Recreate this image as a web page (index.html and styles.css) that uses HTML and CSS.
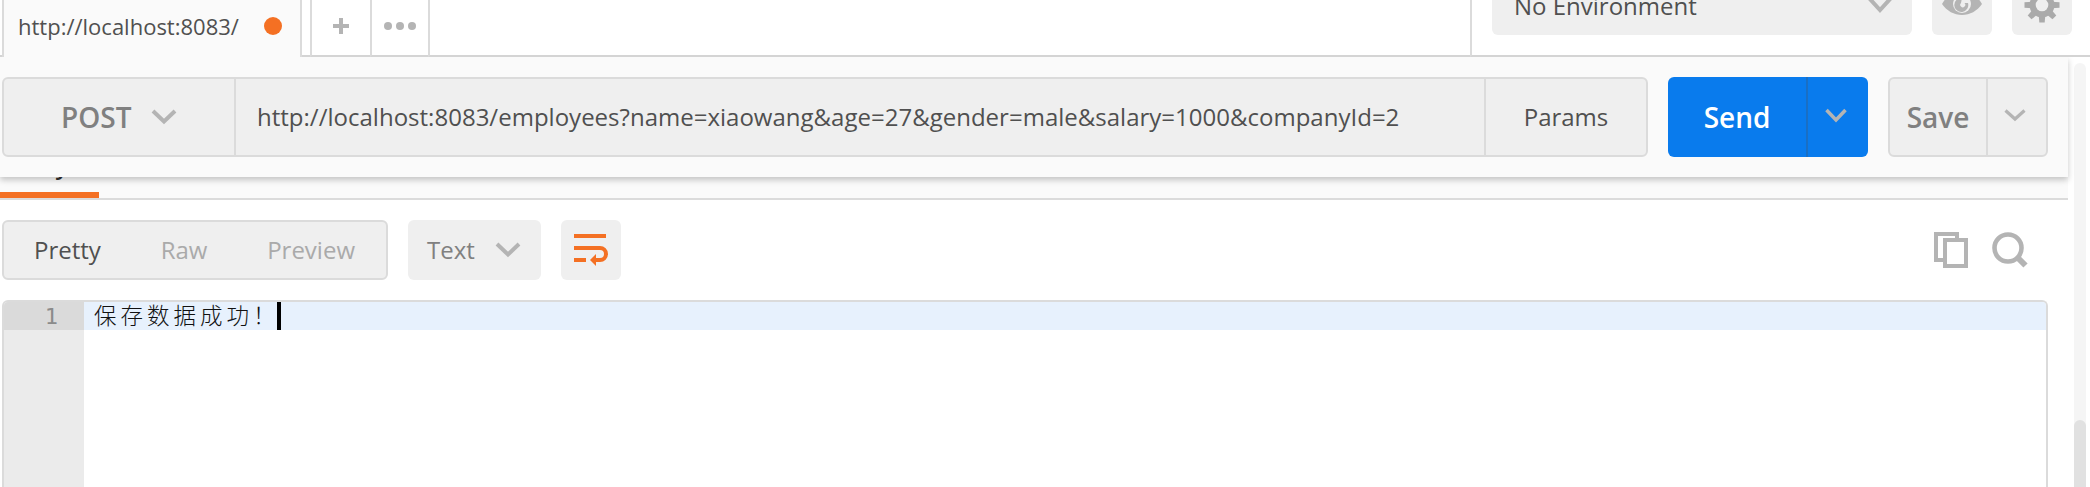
FILE: index.html
```html
<!DOCTYPE html>
<html lang="en">
<head>
<meta charset="utf-8">
<title>Request builder</title>
<link rel="stylesheet" href="styles.css">
</head>
<body>
<div class="app">
  <header class="topbar">
    <div class="tab"><span class="tab-name">http://localhost:8083/</span><span class="dot"></span></div>
    <div class="tab-gap"></div>
    <div class="tab-add"><svg width="16" height="16" viewBox="0 0 16 16"><path d="M8 0V16M0 8H16" stroke="#b4b4b4" stroke-width="4"/></svg></div>
    <div class="tab-more"><svg width="32" height="8" viewBox="0 0 32 8" fill="#b4b4b4"><circle cx="4" cy="4" r="4"/><circle cx="16" cy="4" r="4"/><circle cx="28" cy="4" r="4"/></svg></div>
    <div class="tab-rest"></div>
    <div class="environment">
      <div class="env-select"><span>No Environment</span>
        <svg width="26" height="18" viewBox="0 0 26 18"><path d="M2 2L13 14L24 2" fill="none" stroke="#b4b4b4" stroke-width="4"/></svg></div>
      <div class="square">
        <svg width="40" height="30" viewBox="0 0 40 30"><path d="M0 14C5 5 12 1 20 1S35 5 40 14C35 21 28 25 20 25S5 21 0 14Z" fill="#b4b4b4"/><circle cx="20" cy="14" r="9" fill="#efefef"/><path d="M20 8A7 7 0 1 0 26 13H22.500A2.500 2.500 0 1 1 19 13Z" fill="#b4b4b4"/></svg></div>
      <div class="square">
        <svg width="36" height="36" viewBox="-18 -18 36 36"><g fill="#aaa"><circle r="12.500"/><path id="tooth" d="M-3.300 -10L-2.700 -17.500H2.700L3.300 -10Z"/><use href="#tooth" transform="rotate(45)"/><use href="#tooth" transform="rotate(90)"/><use href="#tooth" transform="rotate(135)"/><use href="#tooth" transform="rotate(180)"/><use href="#tooth" transform="rotate(225)"/><use href="#tooth" transform="rotate(270)"/><use href="#tooth" transform="rotate(315)"/></g><circle r="6.300" fill="#efefef"/></svg></div>
    </div>
  </header>
  <div class="body">
    <main class="content">
      <section class="request">
        <div class="url-group">
          <div class="method"><span>POST</span><svg width="26" height="16" viewBox="0 0 26 16"><path d="M2 2L13 12.500L24 2" fill="none" stroke="#b4b4b4" stroke-width="4"/></svg></div>
          <div class="url"><span>http://localhost:8083/employees?name=xiaowang&amp;age=27&amp;gender=male&amp;salary=1000&amp;companyId=2</span></div>
          <div class="params">Params</div>
        </div>
        <div class="send"><div class="send-main">Send</div><div class="send-drop"><svg width="22" height="16" viewBox="0 0 22 16"><path d="M1.500 2L11 12L20.500 2" fill="none" stroke="#b4b4b4" stroke-width="3.500"/></svg></div></div>
        <div class="save"><div class="save-main">Save</div><div class="save-drop"><svg width="22" height="14" viewBox="0 0 22 14"><path d="M1.500 1.500L11 10L20.500 1.500" fill="none" stroke="#b4b4b4" stroke-width="3.200"/></svg></div></div>
      </section>
      <nav class="response-tabs"><div class="response-tab"><span>Body</span></div></nav>
      <div class="toolbar">
        <div class="modes"><span class="mode mode-on">Pretty</span><span class="mode">Raw</span><span class="mode">Preview</span></div>
        <div class="format"><span>Text</span><svg width="26" height="16" viewBox="0 0 26 16"><path d="M2 2L13 12.500L24 2" fill="none" stroke="#b4b4b4" stroke-width="4"/></svg></div>
        <div class="wrap"><svg width="34" height="32" viewBox="0 0 34 32"><path d="M0 2H32M0 14H26A6 6 0 0 1 26 26H21M0 26H12" fill="none" stroke="#f47023" stroke-width="4"/><path d="M16 26L22 20V32Z" fill="#f47023"/></svg></div>
        <div class="tools">
          <svg width="34" height="36" viewBox="0 0 34 36" fill="none" stroke="#b4b4b4" stroke-width="4"><path d="M11 28H2V2H23V8"/><path d="M11 8H32V34H11Z"/></svg>
          <svg width="36" height="36" viewBox="0 0 36 36" fill="none" stroke="#b4b4b4"><circle cx="16" cy="16" r="13.500" stroke-width="4.600"/><path d="M25.500 25.500L33.500 33.500" stroke-width="6"/></svg>
        </div>
      </div>
      <div class="editor">
        <div class="gutter"><div class="line-no">1</div></div>
        <div class="code"><div class="line"><span class="code-text">保存数据成功！</span><span class="caret"></span></div></div>
      </div>
    </main>
    <div class="scrollbar"><div class="thumb"></div></div>
  </div>
</div>
</body>
</html>
```
FILE: styles.css
```css
* { box-sizing: border-box; }
html, body { height: 487px; overflow: hidden; }
body { margin: 0; background: #fff; font-family: "Open Sans", "Noto Sans", sans-serif; font-size: 24px; color: #505050; }
svg { display: block; flex: none; }
span { white-space: nowrap; }
.app { width: 2090px; height: 487px; display: flex; flex-direction: column; overflow: hidden; }

.topbar { display: flex; height: 57px; flex: none; padding-left: 2px; background: linear-gradient(#d4d4d4, #d4d4d4) 0 55px / 2px 2px no-repeat; }
.tab { display: flex; align-items: center; justify-content: space-between; width: 300px; padding: 0 18px 5px 14px; background: #fafafa; border: solid #dbdbdb; border-width: 0 2px; font-size: 22px; }
.dot { width: 18px; height: 18px; border-radius: 50%; background: #f47023; }
.tab-gap, .tab-add, .tab-more, .tab-rest, .environment { border-bottom: 2px solid #d4d4d4; }
.tab-gap { width: 8px; }
.tab-add, .tab-more { display: flex; align-items: center; justify-content: center; padding-bottom: 3px; border-left: 2px solid #dbdbdb; }
.tab-add { width: 60px; }
.tab-more { width: 58px; }
.tab-rest { width: 1042px; border-left: 2px solid #dbdbdb; }
.environment { flex: 1; display: flex; gap: 20px; padding-left: 20px; border-left: 2px solid #dbdbdb; }
.env-select, .square { height: 60px; margin-top: -25px; border-radius: 6px; background: #efefef; }
.env-select { width: 420px; display: flex; align-items: center; justify-content: space-between; padding: 0 19px 0 22px; }
.square { width: 60px; display: flex; align-items: center; justify-content: center; }

.body { flex: 1; min-height: 0; display: flex; }
.content { width: 2068px; display: flex; flex-direction: column; }
.request { position: relative; z-index: 1; display: flex; gap: 20px; height: 120px; flex: none; padding: 20px 20px 20px 2px; background: #fafafa; box-shadow: 0 3px 6px rgba(0, 0, 0, .22); clip-path: inset(0 -8px -12px 0); }
.url-group, .save { display: flex; background: #efefef; border: 2px solid #dbdbdb; border-radius: 6px; }
.url-group { width: 1646px; }
.method { width: 230px; display: flex; align-items: center; gap: 20px; padding: 0 0 1px 57px; font-size: 28px; font-weight: 600; color: #808080; }
.url { flex: 1; display: flex; align-items: center; padding: 0 0 2px 21px; border-left: 2px solid #dbdbdb; letter-spacing: .01px; }
.params { width: 162px; display: flex; align-items: center; justify-content: center; padding-bottom: 2px; border-left: 2px solid #dbdbdb; }
.send { width: 200px; display: flex; overflow: hidden; border-radius: 6px; background: #097bed; color: #fff; font-size: 28px; font-weight: 600; }
.send-main { width: 138px; display: flex; align-items: center; justify-content: center; }
.send-drop { flex: 1; display: flex; align-items: center; justify-content: center; padding: 0 4px 2px 0; border-left: 2px solid #1a6fc4; }
.save { width: 160px; color: #808080; font-size: 28px; font-weight: 600; }
.save-main { width: 96px; display: flex; align-items: center; justify-content: center; }
.save-drop { flex: 1; display: flex; align-items: center; justify-content: center; padding: 0 4px 3px 0; border-left: 2px solid #dbdbdb; }

.response-tabs { height: 23px; flex: none; background: #fafafa; border-bottom: 2px solid #dbdbdb; }
.response-tab { width: 99px; height: 21px; display: flex; align-items: flex-end; padding-left: 10px; border-bottom: 6px solid #f47023; color: #303030; font-weight: 600; font-size: 24px; line-height: 30px; }
.response-tab span { margin-bottom: 12px; }
.toolbar { height: 100px; flex: none; display: flex; gap: 20px; padding: 20px 40px 20px 2px; }
.modes { width: 386px; display: flex; align-items: center; justify-content: space-between; padding: 0 31px 1px 30px; background: #efefef; border: 2px solid #dbdbdb; border-radius: 6px; }
.mode { color: #aaa; }
.mode-on { color: #505050; }
.format { width: 133px; display: flex; align-items: center; justify-content: space-between; padding: 0 20px 1px 19px; border-radius: 6px; background: #efefef; color: #808080; }
.wrap { width: 60px; display: flex; align-items: center; justify-content: center; border-radius: 6px; background: #efefef; }
.tools { flex: 1; display: flex; align-items: center; justify-content: flex-end; gap: 24px; }

.editor { flex: 1; width: 2046px; margin-left: 2px; display: flex; overflow: hidden; border: 2px solid #dbdbdb; border-bottom: 0; border-radius: 6px 6px 0 0; }
.gutter { width: 80px; background: #ebebeb; }
.line-no { height: 28px; padding-right: 26px; background: #dadada; color: #8b8b8b; font: 22px/29px "DejaVu Sans Mono", monospace; text-align: right; }
.code { flex: 1; }
.line { height: 28px; display: flex; padding-left: 10px; background: #e7f1fd; }
.code-text { width: 183px; color: #111; font: 300 22.500px/24px "Noto Sans CJK SC", sans-serif; letter-spacing: 4px; }
.caret { width: 4px; background: #000; }
.scrollbar { width: 12px; margin: 6px 0 0 6px; border-radius: 6px 6px 0 0; background: #f5f5f5; overflow: hidden; }
.thumb { height: 80px; margin-top: 357px; border-radius: 6px 6px 0 0; background: #e1e1e1; }
```
